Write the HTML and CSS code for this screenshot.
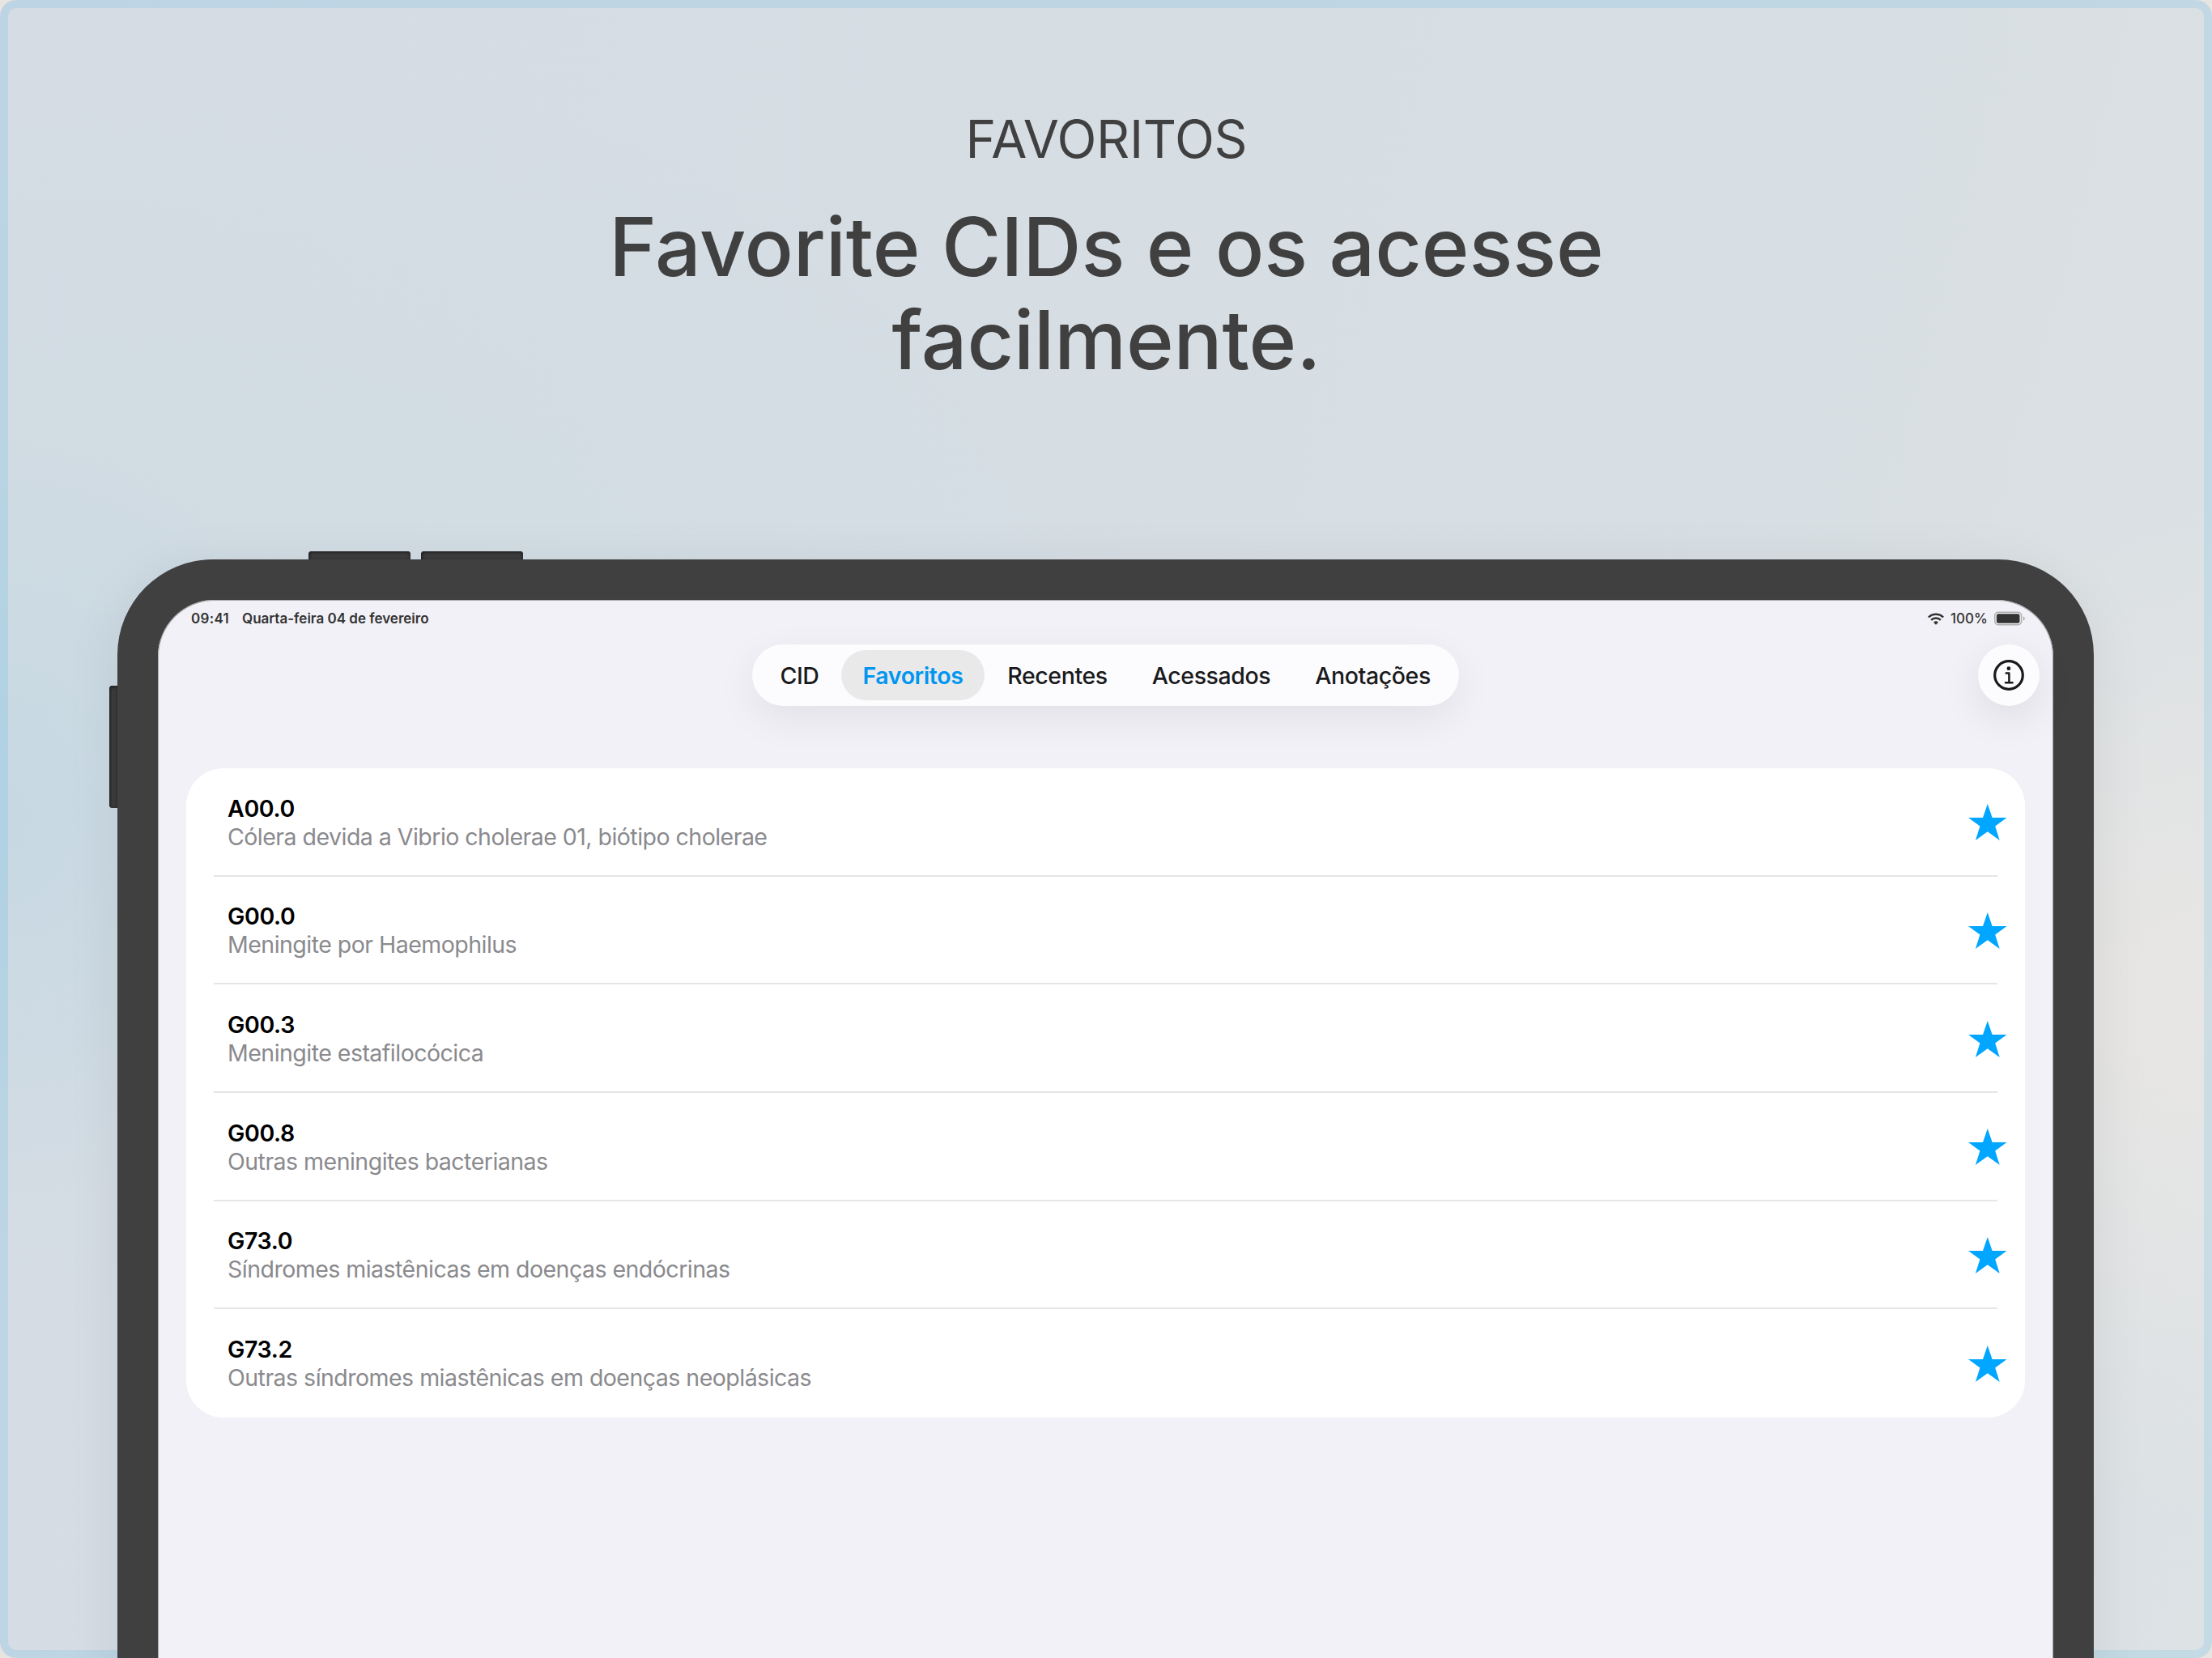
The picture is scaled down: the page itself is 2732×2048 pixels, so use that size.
FILE: index.html
```
<!DOCTYPE html>
<html lang="pt-BR">
<head>
<meta charset="utf-8">
<title>Favoritos</title>
<link rel="stylesheet" href="styles.css">
</head>
<body>
<svg class="defs" aria-hidden="true">
  <symbol id="star" viewBox="0 0 47.6 45"><path d="M23.8 0 29.6 17H47.6L33.2 27.5 38.7 45 23.8 34.2 8.9 45 14.4 27.5 0 17H18Z"/></symbol>
</svg>
<main class="poster">
  <header class="intro">
    <p class="eyebrow">FAVORITOS</p>
    <h1 class="headline">Favorite CIDs e os acesse<br>facilmente.</h1>
  </header>
  <div class="tablet">
    <span class="key key-up"></span>
    <span class="key key-down"></span>
    <span class="key key-power"></span>
    <div class="screen">
      <div class="status">
        <span class="time">09:41</span>
        <span class="date">Quarta-feira 04 de fevereiro</span>
        <svg class="wifi" viewBox="0 0 19 14" fill="none" stroke="#333" stroke-width="2.3">
          <path d="M.8 5.1a12.3 12.3 0 0 1 17.4 0"/>
          <path d="M3.9 8.3a7.9 7.9 0 0 1 11.2 0"/>
          <path d="M9.5 14 6.7 11.1a4 4 0 0 1 5.6 0Z" fill="#333" stroke="none"/>
        </svg>
        <span class="charge">100%</span>
        <svg class="battery" viewBox="0 0 38 18">
          <rect x=".8" y="1.2" width="32.8" height="15.6" rx="4.2" fill="none" stroke="#adadb0" stroke-width="1.5"/>
          <rect x="2.9" y="3.2" width="28.6" height="11.6" rx="2.2" fill="#333"/>
          <path d="M35.8 6.2q2 1 2 2.8t-2 2.8Z" fill="#adadb0"/>
        </svg>
      </div>
      <div class="toolbar">
        <nav class="tabs">
          <span class="tab">CID</span>
          <span class="tab active">Favoritos</span>
          <span class="tab">Recentes</span>
          <span class="tab">Acessados</span>
          <span class="tab">Anotações</span>
        </nav>
        <button class="info" aria-label="Informações">
          <svg viewBox="0 0 38 38" fill="none" stroke="#1a1a1c" stroke-linecap="round" stroke-linejoin="round">
            <circle cx="19" cy="19" r="17.3" stroke-width="3.2"/>
            <path d="M15.7 16.6h3.7v11.7M15 28.3h8.6" stroke-width="2.5"/>
            <circle cx="18.9" cy="10.7" r="2.4" fill="#1a1a1c" stroke="none"/>
          </svg>
        </button>
      </div>
      <ul class="list">
        <li class="row"><div><h2>A00.0</h2><p>Cólera devida a Vibrio cholerae 01, biótipo cholerae</p></div><svg class="star"><use href="#star"/></svg></li>
        <li class="row"><div><h2>G00.0</h2><p>Meningite por Haemophilus</p></div><svg class="star"><use href="#star"/></svg></li>
        <li class="row"><div><h2>G00.3</h2><p>Meningite estafilocócica</p></div><svg class="star"><use href="#star"/></svg></li>
        <li class="row"><div><h2>G00.8</h2><p>Outras meningites bacterianas</p></div><svg class="star"><use href="#star"/></svg></li>
        <li class="row"><div><h2>G73.0</h2><p>Síndromes miastênicas em doenças endócrinas</p></div><svg class="star"><use href="#star"/></svg></li>
        <li class="row"><div><h2>G73.2</h2><p>Outras síndromes miastênicas em doenças neoplásicas</p></div><svg class="star"><use href="#star"/></svg></li>
      </ul>
    </div>
  </div>
</main>
</body>
</html>
```
FILE: styles.css
```
* { box-sizing: border-box; margin: 0; padding: 0; }

body {
  background: #e6e5e2;
  font-family: Inter, "Liberation Sans", sans-serif;
  overflow: hidden;
}

.defs { display: none; }

.poster {
  position: relative;
  width: 2732px;
  height: 2048px;
  overflow: hidden;
  border-radius: 20px;
  background:
    radial-gradient(ellipse 420px 480px at 0 1010px, rgba(194, 214, 226, .65), rgba(194, 214, 226, 0)),
    radial-gradient(ellipse 1500px 800px at 0 850px, rgba(203, 219, 226, .6), rgba(203, 219, 226, 0)),
    radial-gradient(ellipse 900px 640px at 2732px 1240px, #e8e6e4, rgba(230, 229, 228, 0)),
    linear-gradient(105deg, #d5dce4 0%, #d6dee4 50%, #d8dfe3 75%, #dde2e5 100%);
}

/* tinted frame around the whole poster */
.poster::after {
  content: "";
  position: absolute;
  inset: 0;
  border: 10px solid rgba(0, 155, 230, .11);
  border-radius: 20px;
  pointer-events: none;
}

.intro {
  height: 691px;
  padding: 133px 0 0 1px;
  text-align: center;
  color: #404040;
}
.eyebrow { font-size: 64px; line-height: 77px; letter-spacing: -.3px; }
.headline {
  margin-top: 38px;
  font-size: 100px;
  font-weight: 500;
  line-height: 114.5px;
  letter-spacing: -.1px;
}

.tablet {
  position: relative;
  z-index: 1;
  width: 2441px;
  height: 1500px;
  margin-left: 145px;
  padding: 50px 50px 0;
  background: #404040;
  border-radius: 118px 118px 0 0;
  box-shadow: 0 10px 70px rgba(0, 0, 0, .07);
}
.key {
  position: absolute;
  background: #3c3c3c;
  box-shadow: inset 2px 2px 3px #252525, inset -2px 0 3px #303030;
}
.key-up, .key-down {
  top: -10px;
  width: 126px;
  height: 10px;
  border-radius: 4px 4px 0 0;
}
.key-up { left: 236px; }
.key-down { left: 375px; }
.key-power {
  top: 156px;
  left: -10px;
  width: 10px;
  height: 151px;
  border-radius: 4px 0 0 4px;
}

.screen {
  height: 100%;
  padding: 11px 17px 0 35px;
  background: #f2f1f7;
  border-radius: 70px 70px 0 0;
  box-shadow: inset 0 0 0 1px #a9a8ac;
}

.status {
  display: flex;
  align-items: center;
  height: 24px;
  padding: 0 18px 0 6px;
  color: #333;
  font-size: 17px;
  font-weight: 600;
  line-height: 24px;
  white-space: nowrap;
}
.time { width: 63px; letter-spacing: .3px; }
.date { flex: 1; }
.wifi { width: 20px; height: 15px; margin-right: 8px; }
.charge { width: 54px; font-weight: 500; }
.battery { width: 38px; height: 18px; }

.toolbar {
  display: flex;
  align-items: center;
  justify-content: space-between;
  height: 76px;
  margin-top: 20px;
  padding-left: 699px;
}
.tabs {
  display: grid;
  grid-template-columns: 103px 177px 180px 200px 199px;
  width: 873px;
  height: 76px;
  padding: 7px;
  background: #fcfcfe;
  border-radius: 38px;
  box-shadow: 0 15px 50px rgba(0, 0, 0, .07);
}
.tab {
  display: flex;
  align-items: center;
  justify-content: center;
  color: #1a1a1c;
  font-size: 28.5px;
  font-weight: 500;
  letter-spacing: -.4px;
}
.tab.active {
  background: #e9e9ea;
  border-radius: 31px;
  color: #0096f0;
  font-weight: 600;
}
.info {
  display: flex;
  align-items: center;
  justify-content: center;
  width: 76px;
  height: 76px;
  border: 0;
  background: #fcfcfe;
  border-radius: 50%;
  box-shadow: 0 15px 50px rgba(0, 0, 0, .09);
}
.info svg { width: 38px; height: 38px; }

.list {
  width: 2271px;
  height: 802px;
  margin-top: 77px;
  display: grid;
  grid-template-rows: repeat(6, 1fr);
  background: #fff;
  border-radius: 46px;
  list-style: none;
}
.row {
  display: flex;
  align-items: center;
  justify-content: space-between;
  padding: 0 22px 0 51px;
  background: linear-gradient(#e6e6e8, #e6e6e8) 34px 100% / 2203px 2px no-repeat;
}
.row:last-child { background: none; }
.row h2, .row p { font-size: 28.5px; line-height: 35px; }
.row h2 { color: #000; font-weight: 600; letter-spacing: -.35px; }
.row p { color: #8a8a8e; letter-spacing: -.52px; }
.star { width: 47.6px; height: 45px; fill: #00a6ff; }
```
